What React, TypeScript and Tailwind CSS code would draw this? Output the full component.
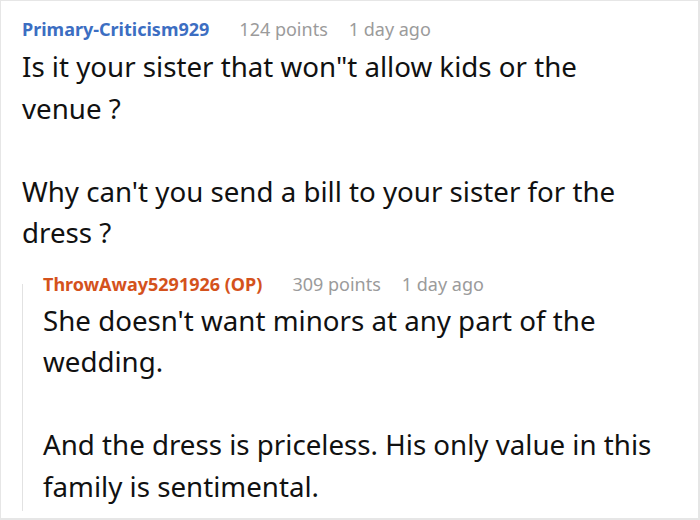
import React from "react";

export default function App() {
  return (
    <div
      className="w-[700px] h-[520px] bg-white border-t border-l border-r-2 border-b-2 border-[#e6e6e6] overflow-hidden pl-[21px] pr-[42px] text-[#111]"
      style={{ fontFamily: '"Noto Sans", sans-serif' }}
    >
      <div className="pt-[16px] flex items-baseline text-[18px] leading-[24px] whitespace-nowrap">
        <span className="font-bold text-[#3c6ec2]">Primary-Criticism929</span>
        <span className="ml-[30px] text-[#9b9b9b]">124 points</span>
        <span className="ml-[21px] text-[#9b9b9b]">1 day ago</span>
      </div>
      <div className="text-[27.7px] leading-[41.5px] mt-[5px]">
        <p>Is it your sister that won"t allow kids or the venue ?</p>
        <p className="mt-[41.5px]">Why can't you send a bill to your sister for the dress ?</p>
      </div>
      <div className="mt-[30px] flex flex-col border-l border-[#e2e2e2] pl-[20px] pb-[4px]">
        <div className="-mt-[12px] flex items-baseline text-[18px] leading-[24px] whitespace-nowrap">
          <span className="font-bold text-[#d4521c]">ThrowAway5291926 (OP)</span>
          <span className="ml-[30px] text-[#9b9b9b]">309 points</span>
          <span className="ml-[21px] text-[#9b9b9b]">1 day ago</span>
        </div>
        <div className="text-[27.7px] leading-[41.5px] mt-[4px]">
          <p>She doesn't want minors at any part of the wedding.</p>
          <p className="mt-[41.5px]">And the dress is priceless. His only value in this family is sentimental.</p>
        </div>
      </div>
    </div>
  );
}
